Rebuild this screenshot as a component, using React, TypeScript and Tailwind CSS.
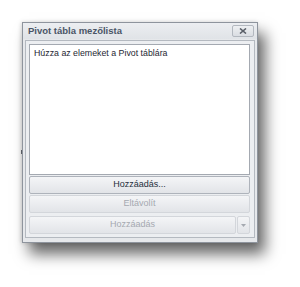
import React from 'react';

const font = { fontFamily: '"Liberation Sans", Arial, sans-serif' };

function Btn({ label, disabled }: { label: string; disabled?: boolean }) {
  return (
    <div
      className={`h-[18px] flex items-center justify-center rounded-[2px] border text-[9px] bg-gradient-to-b from-[#f4f5f7] to-[#e2e4e8] ${
        disabled ? 'border-[#d3d6db] text-[#a5a9b0]' : 'border-[#aeb3bb] text-[#26303c]'
      }`}
    >
      {label}
    </div>
  );
}

export default function App() {
  return (
    <div className="w-[300px] h-[287px] bg-white relative overflow-hidden" style={font}>
      {/* small tick left of the dialog */}
      <div className="absolute left-[21px] top-[150px] w-px h-[4px] bg-[#6b7078]" />
      <div className="absolute left-[22px] top-[22px] w-[236px] h-[221px] border border-[#8e949d] bg-[#e6e8eb] shadow-[7px_11px_14px_rgba(0,0,0,0.6),-1px_0_4px_rgba(0,0,0,0.15)] flex flex-col">
        {/* Title bar */}
        <div className="h-[16px] flex items-center justify-between pl-[5px] pr-[3px] bg-gradient-to-b from-[#eceef1] to-[#e0e3e7]">
          <span className="text-[9.5px] font-bold text-[#4a5566] leading-none">
            Pivot tábla mezőlista
          </span>
          <div className="w-[22px] h-[12px] rounded-[2px] border border-[#b3b8bf] bg-gradient-to-b from-[#eef0f2] to-[#dadde2] flex items-center justify-center">
            <svg width="8" height="6" viewBox="0 0 8 6">
              <path d="M1 0.5 L7 5.5 M7 0.5 L1 5.5" stroke="#5b6069" strokeWidth="1.6" />
            </svg>
          </div>
        </div>
        {/* Inner panel */}
        <div className="mx-[2px] mt-[1px] h-[198px] border border-[#b4b9c0] bg-[#eceef1] pt-[3px] pl-[3px] pr-[4px] flex flex-col">
          <div className="h-[131px] border border-[#a4a9b1] bg-white px-[4px] pt-[4px]">
            <span className="text-[8.8px] text-[#1e2733] leading-none block">
              Húzza az elemeket a Pivot táblára
            </span>
          </div>
          <div className="mt-[1px] flex flex-col gap-[1px]">
            <Btn label="Hozzáadás..." />
            <Btn label="Eltávolít" disabled />
          </div>
          <div className="mt-[3px] flex gap-[1px]">
            <div className="flex-1">
              <Btn label="Hozzáadás" disabled />
            </div>
            <div className="w-[13px] h-[18px] rounded-[2px] border border-[#d3d6db] bg-gradient-to-b from-[#f4f5f7] to-[#e2e4e8] flex items-center justify-center">
              <svg width="5" height="3" viewBox="0 0 5 3">
                <path d="M0 0 L5 0 L2.5 3 Z" fill="#a5a9b0" />
              </svg>
            </div>
          </div>
        </div>
      </div>
    </div>
  );
}
